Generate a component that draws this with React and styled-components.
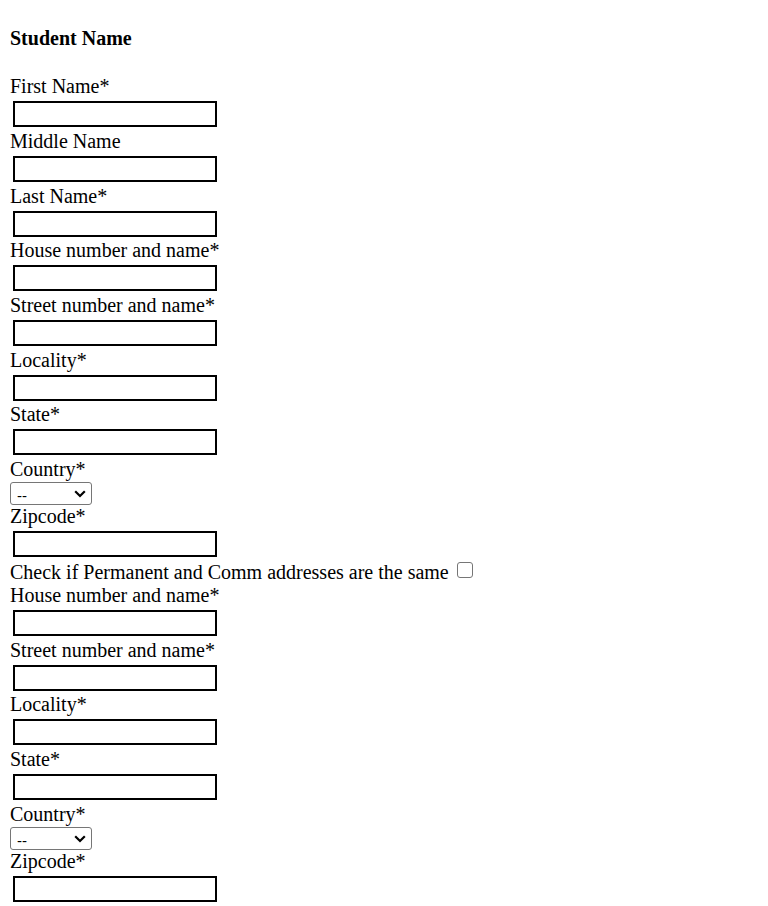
import React from 'react';
import styled, { createGlobalStyle } from 'styled-components';

const GlobalStyle = createGlobalStyle`
    html, body {
        margin: 0;
        padding: 0;
        background: #fff;
    }

    body {
        font-family: "Liberation Serif", "Times New Roman", serif;
        color: #000;
    }
`;

const Form = styled.form`
    padding: 27px 10px 0;
    font-size: 20px;
    line-height: 23px;
`;

const Heading = styled.h4`
    margin: 0 0 25.3px;
    font-size: 20px;
    line-height: 23px;
    font-weight: bold;
`;

const Field = styled.div`
    display: flex;
    flex-direction: column;
    align-items: flex-start;
`;

const Label = styled.label`
    display: block;
    height: 23px;
    white-space: nowrap;
`;

const TextInput = styled.input`
    box-sizing: border-box;
    width: 204px;
    height: 26px;
    margin: 3px 0 ${props => (props.$spaced ? '4px' : '2.7px')} 3px;
    padding: 0 3px;
    border: 2px solid #000;
    background: #fff;
    font-family: "Liberation Sans", Arial, sans-serif;
    font-size: 16px;
    outline: none;
`;

const SelectBox = styled.div`
    position: relative;
    box-sizing: border-box;
    width: 82px;
    height: 23px;
    margin-top: 1px;
    border: 1px solid #767676;
    border-radius: 3px;
    background: #fff;
`;

const Select = styled.select`
    appearance: none;
    box-sizing: border-box;
    width: 100%;
    height: 100%;
    padding: 0 0 0 6px;
    border: 0;
    background: transparent;
    color: #000;
    font-family: "Liberation Sans", Arial, sans-serif;
    font-size: 15px;
    outline: none;
`;

const Chevron = styled.svg`
    position: absolute;
    top: 7px;
    right: 5px;
    pointer-events: none;
`;

const CheckLine = styled.div`
    height: 23px;
    white-space: nowrap;
`;

const Checkbox = styled.input`
    appearance: none;
    box-sizing: border-box;
    width: 16px;
    height: 16px;
    margin: 0 0 1px 3px;
    border: 1px solid #767676;
    border-radius: 3px;
    background: #fff;
    vertical-align: baseline;
`;

const TextField = ({ label, spaced }) => (
    <Field>
        <Label>{label}</Label>
        <TextInput type="text" $spaced={spaced} />
    </Field>
);

const CountryField = () => (
    <Field>
        <Label>Country*</Label>
        <SelectBox>
            <Select defaultValue="">
                <option value="">--</option>
                <option value="in">India</option>
                <option value="us">United States</option>
            </Select>
            <Chevron width="12" height="8" viewBox="0 0 12 8">
                <path d="M1.2 1.2 L6 6 L10.8 1.2" fill="none" stroke="#000" strokeWidth="2.2" />
            </Chevron>
        </SelectBox>
    </Field>
);

const AddressFields = ({ spacedZip }) => (
    <>
        <TextField label="House number and name*" />
        <TextField label="Street number and name*" />
        <TextField label="Locality*" />
        <TextField label="State*" />
        <CountryField />
        <TextField label="Zipcode*" spaced={spacedZip} />
    </>
);

const App = () => (
    <>
        <GlobalStyle />
        <Form onSubmit={e => e.preventDefault()}>
            <Heading>Student Name</Heading>
            <TextField label="First Name*" />
            <TextField label="Middle Name" />
            <TextField label="Last Name*" />
            <AddressFields spacedZip />
            <CheckLine>
                Check if Permanent and Comm addresses are the same <Checkbox type="checkbox" />
            </CheckLine>
            <AddressFields />
        </Form>
    </>
);

export default App;
